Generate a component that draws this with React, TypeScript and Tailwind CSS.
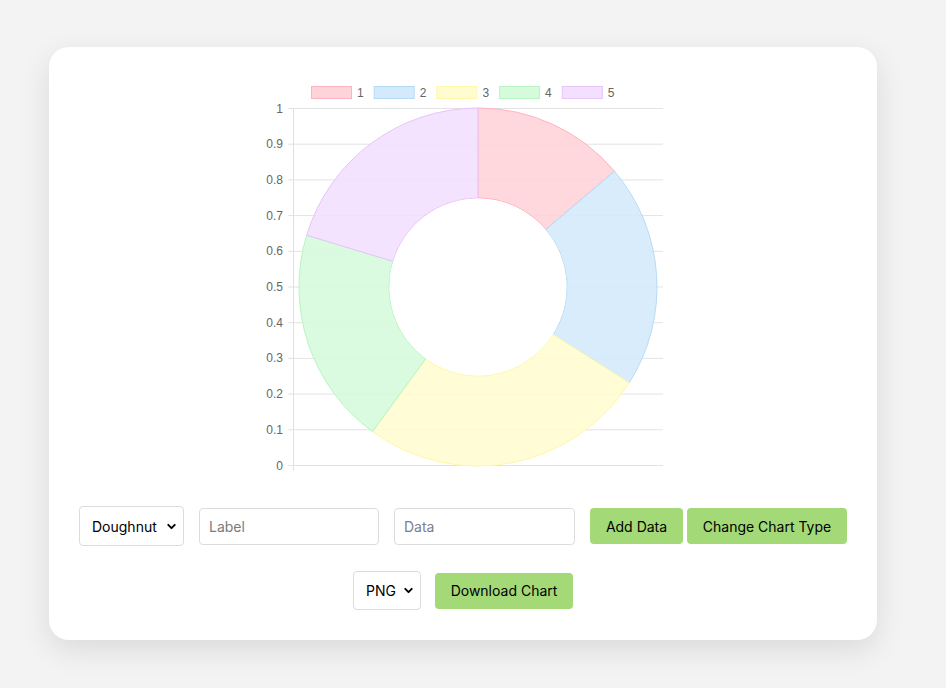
import { ChevronDown } from 'lucide-react'

const segments = [
  { label: '1', from: -90, to: -40.3, fill: '#ffd3da', stroke: '#ffb3c2' },
  { label: '2', from: -40.3, to: 32.3, fill: '#d4e9fb', stroke: '#b5dcf7' },
  { label: '3', from: 32.3, to: 126.1, fill: '#fffcd0', stroke: '#fdf9a8' },
  { label: '4', from: 126.1, to: 196.8, fill: '#d5fbdc', stroke: '#b8f5c3' },
  { label: '5', from: 196.8, to: 270, fill: '#f3dffe', stroke: '#e7c4fa' },
]
const ticks = ['1', '0.9', '0.8', '0.7', '0.6', '0.5', '0.4', '0.3', '0.2', '0.1', '0']

const CX = 225, CY = 207, R = 179, RI = 89

function pt(r: number, deg: number) {
  const a = (deg * Math.PI) / 180
  return `${(CX + r * Math.cos(a)).toFixed(2)} ${(CY + r * Math.sin(a)).toFixed(2)}`
}

function arc(from: number, to: number) {
  const big = to - from > 180 ? 1 : 0
  return `M ${pt(R, from)} A ${R} ${R} 0 ${big} 1 ${pt(R, to)} L ${pt(RI, to)} A ${RI} ${RI} 0 ${big} 0 ${pt(RI, from)} Z`
}

function Chart() {
  const top = 28.5, bottom = 385.5
  const step = (bottom - top) / 10
  return (
    <svg width="420" height="392" viewBox="0 0 420 392" className="block"
      style={{ fontFamily: '"Liberation Sans", Arial, sans-serif' }}>
      {/* legend */}
      {segments.map((s, i) => (
        <g key={s.label}>
          <rect x={58.5 + i * 62.7} y={6.5} width={40} height={12} fill={s.fill} stroke={s.stroke} strokeWidth={1} />
          <text x={104 + i * 62.7} y={17} fontSize="12" fill="#666">{s.label}</text>
        </g>
      ))}
      {/* grid */}
      {ticks.map((t, i) => {
        const y = top + i * step
        return (
          <g key={t}>
            <line x1={35} x2={410} y1={y} y2={y} stroke="#e3e3e3" strokeWidth={1} />
            <text x={30} y={y + 4} fontSize="12" fill="#666" textAnchor="end">{t}</text>
          </g>
        )
      })}
      <line x1={40.5} x2={40.5} y1={top} y2={bottom + 5} stroke="#e0e0e0" strokeWidth={1} />
      {/* doughnut */}
      {segments.map(s => (
        <path key={s.label} d={arc(s.from, s.to)} fill={s.fill} fillOpacity={0.88} stroke={s.stroke} strokeWidth={1} />
      ))}
      <circle cx={CX} cy={CY} r={RI - 0.5} fill="#fff" />
    </svg>
  )
}

export default function App() {
  return (
    <div className="min-h-screen bg-[#f3f3f3] pt-[47px] pl-[49px]"
      style={{ fontFamily: 'Inter, "Noto Sans", sans-serif' }}>
      <div className="w-[828px] h-[593px] bg-white rounded-[20px] shadow-[0_10px_30px_rgba(0,0,0,0.1)] flex flex-col items-center pt-[33px]">
        <Chart />

        <div className="flex items-center mt-[34px] text-[14px] text-black">
          <div className="relative w-[105px] h-[40px] mr-[15px]">
            <select defaultValue="doughnut"
              className="appearance-none w-full h-full border border-[#dcdcdc] rounded-[4px] bg-white pl-[12px] outline-none">
              <option value="doughnut">Doughnut</option>
              <option value="bar">Bar</option>
              <option value="line">Line</option>
              <option value="pie">Pie</option>
            </select>
            <ChevronDown size={13} strokeWidth={3.5} className="absolute right-[6px] top-[14px] pointer-events-none" />
          </div>
          <input placeholder="Label"
            className="w-[180px] h-[37px] border border-[#dcdcdc] rounded-[4px] px-[9px] mr-[15px] outline-none placeholder:text-[#7b7b7b]" />
          <input placeholder="Data"
            className="w-[181px] h-[37px] border border-[#dcdcdc] rounded-[4px] px-[9px] mr-[15px] outline-none placeholder:text-[#7a7f8c]" />
          <button className="w-[93px] h-[36px] bg-[#a3d977] rounded-[4px] mr-[4px]">Add Data</button>
          <button className="w-[160px] h-[36px] bg-[#a3d977] rounded-[4px]">Change Chart Type</button>
        </div>

        <div className="flex items-center mt-[25px] text-[14px] text-black">
          <div className="relative w-[68px] h-[39px] mr-[14px]">
            <select defaultValue="png"
              className="appearance-none w-full h-full border border-[#dcdcdc] rounded-[4px] bg-white pl-[12px] outline-none">
              <option value="png">PNG</option>
              <option value="jpeg">JPEG</option>
            </select>
            <ChevronDown size={13} strokeWidth={3.5} className="absolute right-[6px] top-[13px] pointer-events-none" />
          </div>
          <button className="w-[138px] h-[36px] bg-[#a3d977] rounded-[4px]">Download Chart</button>
        </div>
      </div>
    </div>
  )
}
